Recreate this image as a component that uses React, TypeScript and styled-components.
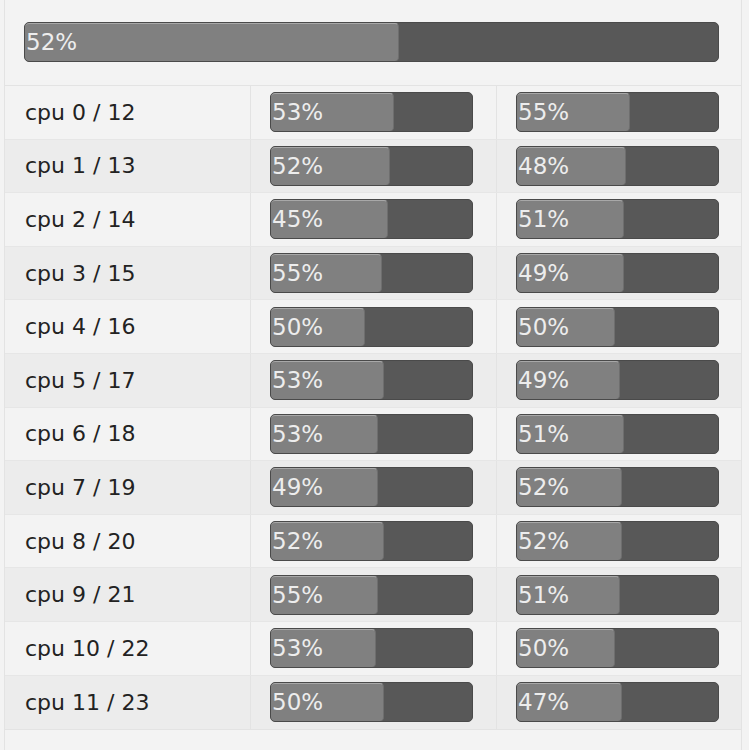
import React from 'react';
import styled, { createGlobalStyle } from 'styled-components';

const GlobalStyle = createGlobalStyle`
  html, body {
    margin: 0;
    padding: 0;
    background: #f3f3f3;
    font-family: 'DejaVu Sans', Verdana, sans-serif;
  }
`;

const Panel = styled.div`
  margin-left: 4px;
  width: 736px;
  height: 750px;
  border-left: 1px solid #e3e3e3;
  border-right: 1px solid #e3e3e3;
  background: #f3f3f3;
`;

const Header = styled.div`
  height: 86px;
  box-sizing: border-box;
  padding: 22px 23px 0 19px;
  border-bottom: 1px solid #e3e3e3;
`;

const Rows = styled.div`
  border-bottom: 1px solid #e3e3e3;
`;

const Row = styled.div<{ $odd: boolean }>`
  display: grid;
  grid-template-columns: 246px 246px 1fr;
  height: 52.6px;
  border-bottom: 1px solid #e6e6e6;
  background: ${(p) => (p.$odd ? '#ececec' : '#f3f3f3')};
  &:last-child {
    border-bottom: none;
    height: 53.6px;
  }
`;

const Label = styled.div`
  display: flex;
  align-items: center;
  padding-left: 20px;
  font-size: 22px;
  color: #222;
  border-right: 1px solid #e3e3e3;
`;

const Cell = styled.div<{ $last?: boolean }>`
  display: flex;
  align-items: center;
  padding-left: 19px;
  border-right: ${(p) => (p.$last ? 'none' : '1px solid #e3e3e3')};
`;

const Track = styled.div<{ $wide?: boolean }>`
  position: relative;
  width: ${(p) => (p.$wide ? '695px' : '203px')};
  height: 40px;
  box-sizing: border-box;
  border: 1px solid #4a4a4a;
  border-radius: 5px;
  background: #585858;
  overflow: hidden;
`;

const Fill = styled.div`
  height: 100%;
  box-sizing: border-box;
  border-top: 1px solid #a8a8a8;
  border-right: 1px solid #6e6e6e;
  border-radius: 4px;
  background: #808080;
`;

const Percent = styled.span`
  position: absolute;
  left: 1px;
  top: 0;
  bottom: 0;
  display: flex;
  align-items: center;
  font-size: 23px;
  color: #ededed;
`;

type BarProps = { value: number; fill: number; wide?: boolean };

function Bar({ value, fill, wide }: BarProps) {
  return (
    <Track $wide={wide}>
      <Fill style={{ width: `${fill}%` }} />
      <Percent>{value}%</Percent>
    </Track>
  );
}

// [value, drawn fill %] per core pair
const cores: [number, number, number, number][] = [
  [53, 61, 55, 56],
  [52, 59, 48, 54],
  [45, 58, 51, 53],
  [55, 55, 49, 53],
  [50, 47, 50, 49],
  [53, 56, 49, 51],
  [53, 53, 51, 53],
  [49, 53, 52, 52],
  [52, 56, 52, 52],
  [55, 53, 51, 51],
  [53, 52, 50, 49],
  [50, 56, 47, 52],
];

export default function App() {
  return (
    <>
      <GlobalStyle />
      <Panel>
        <Header>
          <Bar value={52} fill={54} wide />
        </Header>
        <Rows>
          {cores.map(([a, fa, b, fb], i) => (
            <Row key={i} $odd={i % 2 === 1}>
              <Label>
                cpu {i} / {i + 12}
              </Label>
              <Cell>
                <Bar value={a} fill={fa} />
              </Cell>
              <Cell $last>
                <Bar value={b} fill={fb} />
              </Cell>
            </Row>
          ))}
        </Rows>
      </Panel>
    </>
  );
}
